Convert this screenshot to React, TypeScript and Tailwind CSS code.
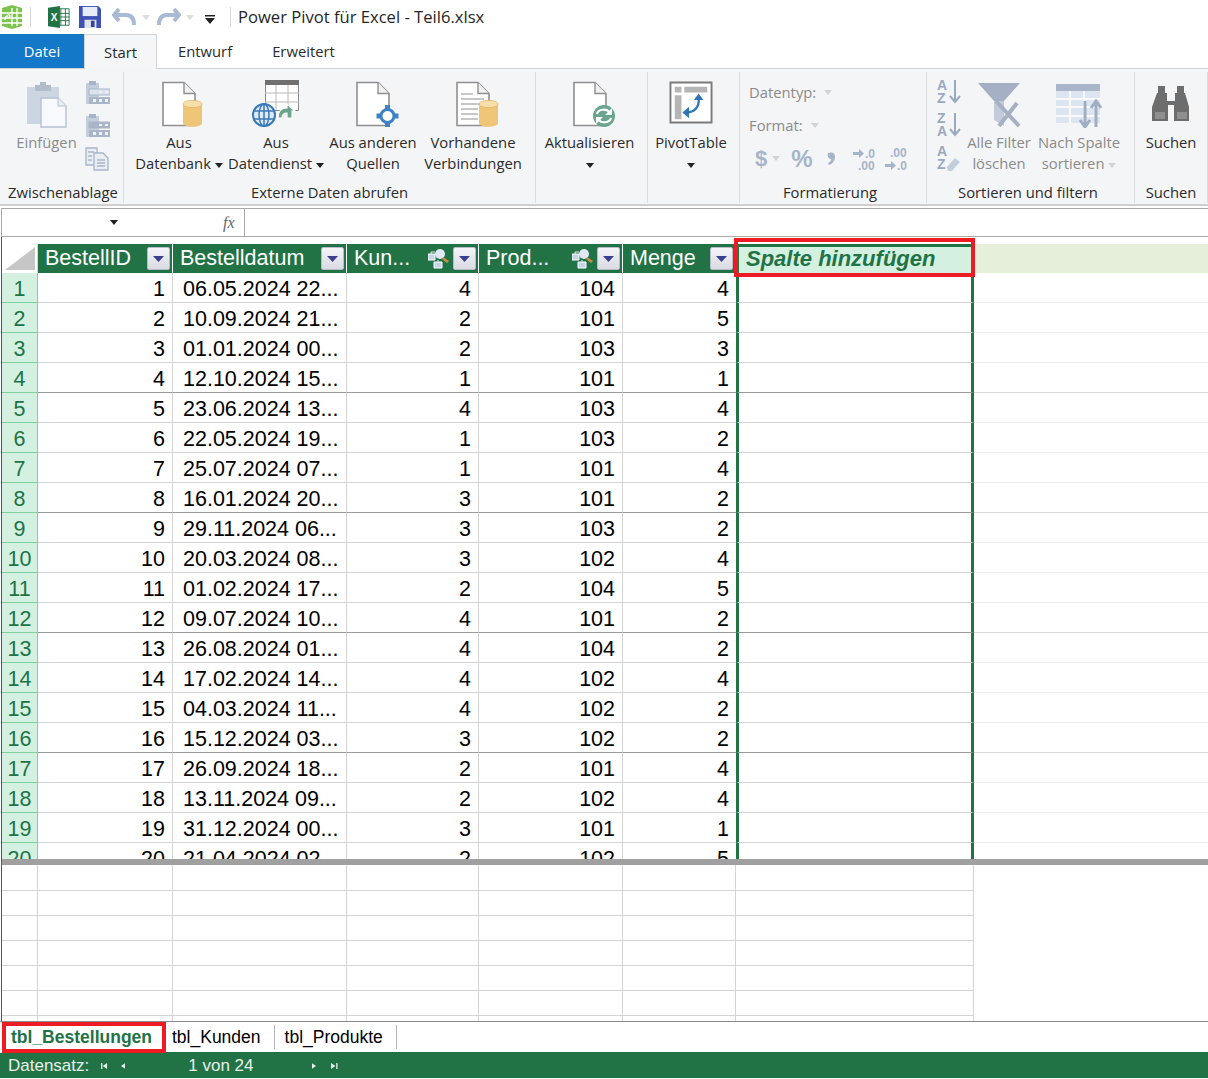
import type { ReactNode } from 'react';

const ui = "font-['Open_Sans',sans-serif]";
const grid = "font-['Liberation_Sans',Arial,sans-serif]";

// BestellID is the row number, so only the remaining columns are listed
const rows: [string, number, number, number][] = [
  ['06.05.2024 22...', 4, 104, 4],
  ['10.09.2024 21...', 2, 101, 5],
  ['01.01.2024 00...', 2, 103, 3],
  ['12.10.2024 15...', 1, 101, 1],
  ['23.06.2024 13...', 4, 103, 4],
  ['22.05.2024 19...', 1, 103, 2],
  ['25.07.2024 07...', 1, 101, 4],
  ['16.01.2024 20...', 3, 101, 2],
  ['29.11.2024 06...', 3, 103, 2],
  ['20.03.2024 08...', 3, 102, 4],
  ['01.02.2024 17...', 2, 104, 5],
  ['09.07.2024 10...', 4, 101, 2],
  ['26.08.2024 01...', 4, 104, 2],
  ['17.02.2024 14...', 4, 102, 4],
  ['04.03.2024 11...', 4, 102, 2],
  ['15.12.2024 03...', 3, 102, 2],
  ['26.09.2024 18...', 2, 101, 4],
  ['13.11.2024 09...', 2, 102, 4],
  ['31.12.2024 00...', 3, 101, 1],
  ['21.04.2024 02...', 2, 102, 5],
];

function Caret({ className = 'fill-[#222]' }: { className?: string }) {
  return (
    <svg width="8" height="5" viewBox="0 0 8 5" className={`inline-block ${className}`}>
      <path d="M0 0h8L4 5z" />
    </svg>
  );
}

function Page({ children, lines }: { children?: ReactNode; lines?: boolean }) {
  return (
    <svg width="54" height="50" viewBox="-2 -3 54 50">
      <path d="M9 1.500h21l11 11v32H9z" fill="#fff" stroke="#8f8f8f" strokeWidth="1.600" />
      <path d="M30 1.500v11h11" fill="#f1f1f1" stroke="#8f8f8f" strokeWidth="1.400" />
      {lines && (
        <path d="M13 13h12M13 18h23M13 23h23M13 28h17M13 33h17M13 38h17" stroke="#b5b5b5" strokeWidth="1.500" />
      )}
      {children}
    </svg>
  );
}

const Cylinder = ({ x = 29 }: { x?: number }) => (
  <g>
    <path d={`M${x} 23v19c0 5 19 5 19 0V23z`} fill="#efc678" />
    <ellipse cx={x + 9.500} cy="23" rx="9.500" ry="3.600" fill="#f7dfa9" stroke="#e2b566" strokeWidth=".8" />
  </g>
);

function DataServiceIcon() {
  return (
    <svg width="48" height="50" viewBox="0 0 48 50">
      <path d="M13.500 2.500h33v30h-33z" fill="#fff" stroke="#8a8a8a" />
      <path d="M13 2h34v5H13z" fill="#6f6f6f" />
      <path d="M13 15h34M13 24h34M24 7v25M36 7v25" stroke="#b8b8b8" />
      <path d="M26 40c0-7 4-10 9-10v-4l8 7-3 0v7h-5v-5c-3 0-5 2-5 5z" fill="#6aa58c" stroke="#fff" strokeWidth="1.200" />
      <circle cx="12" cy="37" r="11" fill="#dfe9f5" stroke="#3b79b8" strokeWidth="2" />
      <ellipse cx="12" cy="37" rx="5" ry="11" fill="none" stroke="#3b79b8" strokeWidth="1.500" />
      <path d="M1 33h22M1 41h22M12 26v22" stroke="#3b79b8" strokeWidth="1.500" />
    </svg>
  );
}

function OtherSourceIcon() {
  return (
    <Page>
      <path d="M37 24h5v22h-5zM28.500 32.500h22v5h-22z" fill="#3e82c4" />
      <circle cx="39.500" cy="35" r="6.500" fill="#fff" stroke="#3e82c4" strokeWidth="3" />
    </Page>
  );
}

function RefreshIcon() {
  return (
    <Page>
      <circle cx="39" cy="35" r="11" fill="#6aa58c" />
      <path d="M32 33c1-5 10-6 13-1M46 37c-1 5-10 6-13 1" fill="none" stroke="#fff" strokeWidth="2.200" />
      <path d="M47 27v7h-7zM31 43v-7h7z" fill="#fff" />
    </Page>
  );
}

function PivotIcon() {
  return (
    <svg width="44" height="43" viewBox="0 0 46 45">
      <path d="M1.500 1.500h43v42h-43z" fill="#fff" stroke="#7a7a7a" strokeWidth="2" />
      <path d="M6 6h7v6H6zM16 6h24v6H16zM6 15h7v25H6z" fill="#b5b5b5" />
      <path d="M31 18c1 9-4 15-13 15" fill="none" stroke="#2f75b5" strokeWidth="2.400" />
      <path d="M26 20l5-7 5 7zM21 27l-7 6 7 6z" fill="#2f75b5" />
    </svg>
  );
}

function PasteIcon() {
  return (
    <svg width="42" height="46" viewBox="0 0 42 46">
      <path d="M1 5h32v37H1z" fill="#ccd5e2" />
      <path d="M9 3h16v6H9z" fill="#b2bdcc" />
      <path d="M14 0h6v4h-6z" fill="#b2bdcc" />
      <path d="M15 16h17l8 8v21H15z" fill="#f7f9fc" stroke="#b5c2d5" strokeWidth="1.400" />
      <path d="M32 16v8h8" fill="#e8edf4" stroke="#b5c2d5" />
    </svg>
  );
}

function ClipTable({ wide }: { wide?: boolean }) {
  return (
    <svg width="25" height="25" viewBox="0 0 25 25">
      <path d="M1 3h13v21H1z" fill="#c3cedd" />
      <path d="M4 1h7v4H4z" fill="#a9b5c7" />
      <path d="M4 9h21v6H4z" fill={wide ? '#aab6c8' : '#dbe2ec'} stroke="#a9b5c7" />
      <path d="M4 17h21v7H4z" fill="#aab6c8" />
      <path d="M8 19h3v3H8zM14 19h3v3h-3zM20 19h3v3h-3zM14 11h3v2h-3zM20 11h3v2h-3z" fill="#eef2f7" />
    </svg>
  );
}

function CopyIcon() {
  return (
    <svg width="24" height="24" viewBox="0 0 24 24" fill="#e9eef5" stroke="#a9b5c7" strokeWidth="1.300">
      <path d="M1 1h11v17H1z" />
      <path d="M9 6h9l5 5v12H9z" />
      <path d="M3 5h6M3 9h4M3 13h4M12 13h8M12 16h8M12 19h8" fill="none" />
    </svg>
  );
}

function SortIcon({ top, bottom, eraser }: { top: string; bottom: string; eraser?: boolean }) {
  return (
    <svg width="24" height="26" viewBox="0 0 24 26" className="overflow-visible">
      <text x="0" y="11" fontSize="14" fontWeight="700" fill="#9aa9bf" fontFamily="Liberation Sans">{top}</text>
      <text x="0" y="24" fontSize="14" fontWeight="700" fill="#9aa9bf" fontFamily="Liberation Sans">{bottom}</text>
      {eraser ? (
        <path d="M10 22l8-9 5 4-8 9h-4z" fill="#c3cedd" />
      ) : (
        <path d="M18 1v21M13 17l5 6 5-6" fill="none" stroke="#9aa9bf" strokeWidth="2" />
      )}
    </svg>
  );
}

function DecimalIcon({ flip }: { flip?: boolean }) {
  return (
    <svg width="26" height="28" viewBox="0 -2 26 28">
      {flip ? (
        <>
          <text x="5" y="10" fontSize="12" fontWeight="700" fill="#a6b4c9" fontFamily="Liberation Sans">.00</text>
          <path d="M0 17h6v-3l5 4.500-5 4.500v-3H0z" fill="#a6b4c9" />
          <text x="12" y="23" fontSize="12" fontWeight="700" fill="#a6b4c9" fontFamily="Liberation Sans">.0</text>
        </>
      ) : (
        <>
          <path d="M0 5h6V2l5 4.500L6 11V8H0z" fill="#a6b4c9" />
          <text x="12" y="11" fontSize="12" fontWeight="700" fill="#a6b4c9" fontFamily="Liberation Sans">.0</text>
          <text x="5" y="23" fontSize="12" fontWeight="700" fill="#a6b4c9" fontFamily="Liberation Sans">.00</text>
        </>
      )}
    </svg>
  );
}

function FilterClearIcon() {
  return (
    <svg width="44" height="46" viewBox="0 0 44 46">
      <path d="M1 1h42L27 19v8L17 19z" fill="#a5b0c4" />
      <path d="M17 19h10v25l-10-6z" fill="#c3cad8" />
      <path d="M19 19l23 25M40 21L22 44" stroke="#a5b0c4" strokeWidth="4" fill="none" />
    </svg>
  );
}

function ColumnSortIcon() {
  return (
    <svg width="46" height="44" viewBox="0 0 46 44">
      <path d="M0 0h44v39H0z" fill="#dde5f0" />
      <path d="M0 0h44v7H0z" fill="#a9b6ca" />
      <path d="M0 15h44M0 23h44M0 32h44M14 7v32M28 7v32" stroke="#fff" strokeWidth="1.500" />
      <path d="M29 17v26M24 36l5 7 5-7M40 43V17M35 24l5-7 5 7" fill="none" stroke="#a0aec4" strokeWidth="3" />
    </svg>
  );
}

function BinocularIcon() {
  return (
    <svg width="42" height="35" viewBox="0 0 42 35" fill="#6d6d6d">
      <path d="M8 0h7v7H8zM27 0h7v7h-7z" />
      <path d="M7 7h10v8h8V7h10l4 14v14H24V19h-6v16H2V21z" />
      <path d="M5 26h10v7H5zM27 26h10v7H27z" fill="#8f8f8f" />
    </svg>
  );
}

function RelationIcon() {
  return (
    <svg width="22" height="20" viewBox="0 0 22 20" className="shrink-0">
      <path d="M0 5h7v6H0zM6 13h8v6H6z" fill="#c7d3e4" stroke="#fff" />
      <path d="M3 5V3h4M10 13v-2" stroke="#e5edf7" fill="none" />
      <circle cx="12" cy="5" r="5" fill="#dfe8f3" />
      <path d="M15 8l6 4-2 2-5-4z" fill="#c98f4a" />
    </svg>
  );
}

function FilterButton() {
  return (
    <span className="flex h-[23px] w-[23px] shrink-0 items-center justify-center rounded-[2px] border border-[#b8bcc8] bg-gradient-to-b from-[#f4f4f8] to-[#d9dae4]">
      <svg width="11" height="6" viewBox="0 0 11 6" className="fill-[#3b3f8f]">
        <path d="M0 0h11L5.500 6z" />
      </svg>
    </span>
  );
}

function Group({ width, label, labelClass = '', children }: { width: string; label: string; labelClass?: string; children: ReactNode }) {
  return (
    <div className={`${width} flex h-[131px] shrink-0 flex-col border-r border-[#dcdcdc]`}>
      <div className="flex h-[110px]">{children}</div>
      <div className={`h-[21px] text-center leading-[21px] text-[#2b2b2b] ${labelClass}`}>{label}</div>
    </div>
  );
}

function RibbonButton({ width, icon, lines, muted }: { width: string; icon: ReactNode; lines: ReactNode[]; muted?: boolean }) {
  return (
    <div className={`${width} flex flex-col items-center pt-[6px] ${muted ? 'text-[#8b8b8b]' : 'text-[#2b2b2b]'}`}>
      <div className="flex h-[54px] items-start justify-center">{icon}</div>
      {lines.map((line, i) => (
        <div key={i} className="h-[21px] whitespace-nowrap leading-[21px]">{line}</div>
      ))}
    </div>
  );
}

const colBase = 'shrink-0 border-r border-[#d4d4d4]';

function HeaderCell({ width, title, relation }: { width: string; title: string; relation?: boolean }) {
  return (
    <div className={`${width} flex h-full shrink-0 items-center border-r border-white bg-[#217346] pl-[7px] pr-[2px] text-white`}>
      <span className="flex-1 whitespace-nowrap">{title}</span>
      {relation && <span className="mr-[3px]"><RelationIcon /></span>}
      <FilterButton />
    </div>
  );
}

export default function App() {
  return (
    <div className={`${ui} relative h-[1079px] w-[1208px] overflow-hidden bg-white text-[14.8px]`}>
      {/* quick access toolbar */}
      <div className="flex h-[34px] items-center">
        <svg width="26" height="26" viewBox="0 0 26 26" className="ml-[-1px]">
          <path d="M3 4l10-3 10 3v18l-10 3-10-3z" fill="#7cc34f" />
          <path d="M13 4v18M3 9h20M3 14h20M3 19h20M18 4v18" stroke="#fff" strokeWidth="1.300" />
          <path d="M6 16c0-3 1-4 3-4M9 10l2 2-2 2" stroke="#fff" strokeWidth="1.500" fill="none" />
        </svg>
        <div className="ml-[5px] h-[20px] w-px bg-[#d8d8d8]" />
        <svg width="22" height="22" viewBox="0 0 24 24" className="ml-[17px]">
          <path d="M9 3h14v18H9z" fill="#fff" stroke="#217346" />
          <path d="M14 3v18M19 3v18M9 8h14M9 12h14M9 16h14" stroke="#217346" />
          <path d="M0 2l13-2v24L0 22z" fill="#217346" />
          <text x="3" y="16" fontSize="11" fontWeight="700" fill="#fff" fontFamily="Liberation Sans">X</text>
        </svg>
        <svg width="22" height="22" viewBox="0 0 24 24" className="ml-[9px]">
          <path d="M0 0h21l3 3v21H0z" fill="#3f51b5" />
          <path d="M4 1h16v10H4z" fill="#e8ecf8" />
          <path d="M6 15h13v9H6z" fill="#dfe3ea" />
          <path d="M13 16h4v7h-4z" fill="#34449a" />
        </svg>
        <svg width="24" height="20" viewBox="0 0 24 20" className="ml-[11px]">
          <path d="M7 2L2 8l5 6M3 8h11c5 0 8 3 8 10" fill="none" stroke="#a9bbd4" strokeWidth="4" />
        </svg>
        <Caret className="ml-[6px] fill-[#dcdcdc]" />
        <svg width="24" height="20" viewBox="0 0 24 20" className="ml-[7px]">
          <path d="M17 2l5 6-5 6M21 8H10C5 8 2 11 2 18" fill="none" stroke="#a9bbd4" strokeWidth="4" />
        </svg>
        <Caret className="ml-[5px] fill-[#dcdcdc]" />
        <svg width="10" height="9" viewBox="0 0 10 9" className="ml-[11px] mt-[4px]">
          <path d="M0 0h10v1.500H0zM0 3h10L5 9z" fill="#222" />
        </svg>
        <div className="ml-[15px] h-[20px] w-px bg-[#d8d8d8]" />
        <span className="ml-[7px] whitespace-nowrap text-[16.6px] text-[#262626]">Power Pivot für Excel - Teil6.xlsx</span>
      </div>

      {/* tabs */}
      <div className="flex h-[35px] items-stretch border-b border-[#d4d4d4] text-[#2b2b2b]">
        <div className="flex w-[84px] items-center justify-center bg-[#1378c8] text-white">Datei</div>
        <div className="z-10 mb-[-1px] flex w-[73px] items-center justify-center border-x border-t border-[#d4d4d4] bg-[#f5f6f8]">Start</div>
        <div className="ml-[21px] flex items-center">Entwurf</div>
        <div className="ml-[40px] flex items-center">Erweitert</div>
      </div>

      {/* ribbon */}
      <div className="flex h-[137px] border-b-2 border-[#d0d0d0] bg-[#f4f5f7] pt-[3px]">
        <Group width="w-[124px]" label="Zwischenablage" labelClass="pl-[3px]">
          <RibbonButton width="w-[93px]" muted icon={<div className="mt-[4px]"><PasteIcon /></div>} lines={['Einfügen']} />
          <div className="ml-[-8px] flex flex-col gap-[8px] pt-[8px]">
            <ClipTable />
            <ClipTable wide />
            <div className="mt-[1px]"><CopyIcon /></div>
          </div>
        </Group>
        <Group width="w-[412px]" label="Externe Daten abrufen">
          <div className="w-[7px]" />
          <RibbonButton width="w-[96px]" icon={<Page><Cylinder /></Page>} lines={['Aus', <span key="a">Datenbank <Caret /></span>]} />
          <RibbonButton width="w-[98px]" icon={<DataServiceIcon />} lines={['Aus', <span key="b">Datendienst <Caret /></span>]} />
          <RibbonButton width="w-[96px]" icon={<OtherSourceIcon />} lines={['Aus anderen', 'Quellen']} />
          <RibbonButton width="w-[104px]" icon={<Page lines><Cylinder x={31} /></Page>} lines={['Vorhandene', 'Verbindungen']} />
        </Group>
        <Group width="w-[112px]" label="">
          <RibbonButton width="w-[107px]" icon={<RefreshIcon />} lines={['Aktualisieren', <Caret key="c" />]} />
        </Group>
        <Group width="w-[92px]" label="">
          <RibbonButton width="w-[86px]" icon={<div className="mt-[3px]"><PivotIcon /></div>} lines={['PivotTable', <Caret key="d" />]} />
        </Group>
        <Group width="w-[187px]" label="Formatierung" labelClass="pr-[6px]">
          <div className="flex flex-col pl-[9px] pt-[4px] text-[#8b8b8b]">
            <div className="flex h-[33px] items-center gap-[8px]">Datentyp: <Caret className="fill-[#d4d4d4]" /></div>
            <div className="flex h-[33px] items-center gap-[8px]">Format: <Caret className="fill-[#d4d4d4]" /></div>
            <div className={`${grid} flex h-[33px] items-center font-bold text-[#a6b4c9]`}>
              <span className="ml-[6px] text-[22px]">$</span>
              <Caret className="ml-[5px] fill-[#d4d4d4]" />
              <span className="ml-[11px] text-[24px]">%</span>
              <svg width="9" height="13" viewBox="0 0 9 13" className="ml-[14px]">
                <path d="M1 1c3-1 7-1 7 4 0 4-3 7-6 8l-1-2c2-1 3-2 3-4C1 7 0 3 1 1z" fill="#a6b4c9" />
              </svg>
              <div className="ml-[17px]"><DecimalIcon /></div>
              <div className="ml-[6px]"><DecimalIcon flip /></div>
            </div>
          </div>
        </Group>
        <Group width="w-[208px]" label="Sortieren und filtern" labelClass="pr-[5px]">
          <div className="flex w-[37px] flex-col gap-[7px] pl-[10px] pt-[7px]">
            <SortIcon top="A" bottom="Z" />
            <SortIcon top="Z" bottom="A" />
            <SortIcon top="A" bottom="Z" eraser />
          </div>
          <RibbonButton width="w-[70px]" muted icon={<div className="mt-[4px]"><FilterClearIcon /></div>} lines={['Alle Filter', 'löschen']} />
          <RibbonButton width="w-[90px]" muted icon={<div className="mt-[6px]"><ColumnSortIcon /></div>} lines={['Nach Spalte', <span key="e">sortieren <Caret className="fill-[#d4d4d4]" /></span>]} />
        </Group>
        <Group width="w-[73px]" label="Suchen">
          <RibbonButton width="w-full" icon={<div className="mt-[8px]"><BinocularIcon /></div>} lines={['Suchen']} />
        </Group>
      </div>

      {/* formula bar */}
      <div className="ml-px mt-[2px] flex h-[29px] border-y border-[#a9a9a9]">
        <div className="flex w-[244px] items-center border-x border-[#a9a9a9]">
          <div className="w-[108px]" />
          <Caret />
          <span className="ml-[105px] font-['Liberation_Serif',serif] text-[16px] italic text-[#666]">fx</span>
        </div>
      </div>

      {/* grid */}
      <div className={`${grid} ml-px h-[784px] border-l border-[#217346] text-[21.5px] text-black`}>
        <div className="h-[7px]" />
        <div className="flex h-[29px]">
          <div className="flex w-[36px] shrink-0 items-center justify-center border-r border-[#d4d4d4]">
            <svg width="30" height="23" viewBox="0 0 30 23">
              <path d="M30 0v23H0z" fill="#c6c6c6" />
            </svg>
          </div>
          <HeaderCell width="w-[135px]" title="BestellID" />
          <HeaderCell width="w-[174px]" title="Bestelldatum" />
          <HeaderCell width="w-[132px]" title="Kun..." relation />
          <HeaderCell width="w-[144px]" title="Prod..." relation />
          <HeaderCell width="w-[113px]" title="Menge" />
          <div className="relative flex h-full w-[238px] shrink-0 items-center border-x-[3px] border-t-[3px] border-[#217346] bg-[#d3f0e0] pb-[3px] pl-[7px] text-[22px] font-bold italic text-[#217346]">
            <span className="whitespace-nowrap">Spalte hinzufügen</span>
            <div className="pointer-events-none absolute bottom-[-4px] left-[-5px] right-[-4px] top-[-9px] border-[4px] border-[#ed1c24]" />
          </div>
          <div className="flex-1 bg-[#e5efda]" />
        </div>
        <div className="h-[586px] overflow-hidden">
          {rows.map(([date, customer, product, qty], i) => {
            const line = (i + 1) % 4 === 0 ? 'border-b-[#9a9a9a]' : 'border-b-[#d4d4d4]';
            return (
              <div key={i} className="flex h-[30px] items-stretch leading-[32px]">
                <div className="w-[36px] shrink-0 border-r border-b border-[#7fd0a0] bg-[#d3f0e0] text-center text-[#217346]">{i + 1}</div>
                <div className={`${colBase} ${line} w-[135px] border-b pr-[7px] text-right`}>{i + 1}</div>
                <div className={`${colBase} ${line} w-[174px] whitespace-nowrap border-b pl-[10px]`}>{date}</div>
                <div className={`${colBase} ${line} w-[132px] border-b pr-[7px] text-right`}>{customer}</div>
                <div className={`${colBase} ${line} w-[144px] border-b pr-[7px] text-right`}>{product}</div>
                <div className={`${line} w-[113px] shrink-0 border-b pr-[7px] text-right`}>{qty}</div>
                <div className={`${line} w-[238px] shrink-0 border-x-[3px] border-b border-x-[#217346]`} />
                <div className={`flex-1 border-b ${(i + 1) % 4 === 0 ? 'border-b-[#d8d8d8]' : 'border-b-[#f0f0f0]'}`} />
              </div>
            );
          })}
        </div>
        <div className="h-[6px] bg-[#a0a0a0]" />
        <div className="h-[156px] overflow-hidden">
          {[26, 25, 25, 25, 25, 25, 25].map((h, i) => (
            <div key={i} className={`flex ${h === 26 ? 'h-[26px]' : 'h-[25px]'}`}>
              <div className={`${colBase} w-[36px] border-b border-b-[#d4d4d4]`} />
              <div className={`${colBase} w-[135px] border-b border-b-[#d4d4d4]`} />
              <div className={`${colBase} w-[174px] border-b border-b-[#d4d4d4]`} />
              <div className={`${colBase} w-[132px] border-b border-b-[#d4d4d4]`} />
              <div className={`${colBase} w-[144px] border-b border-b-[#d4d4d4]`} />
              <div className={`${colBase} w-[113px] border-b border-b-[#d4d4d4]`} />
              <div className={`${colBase} w-[238px] border-b border-b-[#d4d4d4]`} />
            </div>
          ))}
        </div>
      </div>

      {/* sheet tabs */}
      <div className={`${grid} flex h-[32px] items-stretch border-t border-[#8a8a8a] text-[17.5px] text-black`}>
        <div className="relative ml-[2px] flex w-[164px] shrink-0 items-center border-[4px] border-[#ed1c24] pl-[5px] font-bold text-[#217346]">
          tbl_Bestellungen
        </div>
        <div className="flex flex-1 items-center border-b border-[#217346]">
          <span className="ml-[6px] flex h-[24px] items-center border-r border-[#b5b5b5] pr-[13px]">tbl_Kunden</span>
          <span className="flex h-[24px] items-center border-r border-[#b5b5b5] pl-[10px] pr-[13px]">tbl_Produkte</span>
        </div>
      </div>

      {/* status bar */}
      <div className={`${grid} flex h-[25px] items-center bg-[#217346] text-[17px] text-[#e8f0ea]`}>
        <span className="ml-[8px]">Datensatz:</span>
        <svg width="7" height="6" viewBox="0 0 8 7" className="ml-[12px] fill-[#e8f0ea]"><path d="M0 0h1.500v7H0zM7 0v7L2 3.500z" /></svg>
        <svg width="4" height="6" viewBox="0 0 5 7" className="ml-[13px] fill-[#e8f0ea]"><path d="M5 0v7L0 3.500z" /></svg>
        <span className="ml-[63px]">1 von 24</span>
        <svg width="4" height="6" viewBox="0 0 5 7" className="ml-[58px] fill-[#e8f0ea]"><path d="M0 0v7l5-3.500z" /></svg>
        <svg width="7" height="6" viewBox="0 0 8 7" className="ml-[15px] fill-[#e8f0ea]"><path d="M0 0v7l5-3.500zM6 0h1.500v7H6z" /></svg>
      </div>
    </div>
  );
}
